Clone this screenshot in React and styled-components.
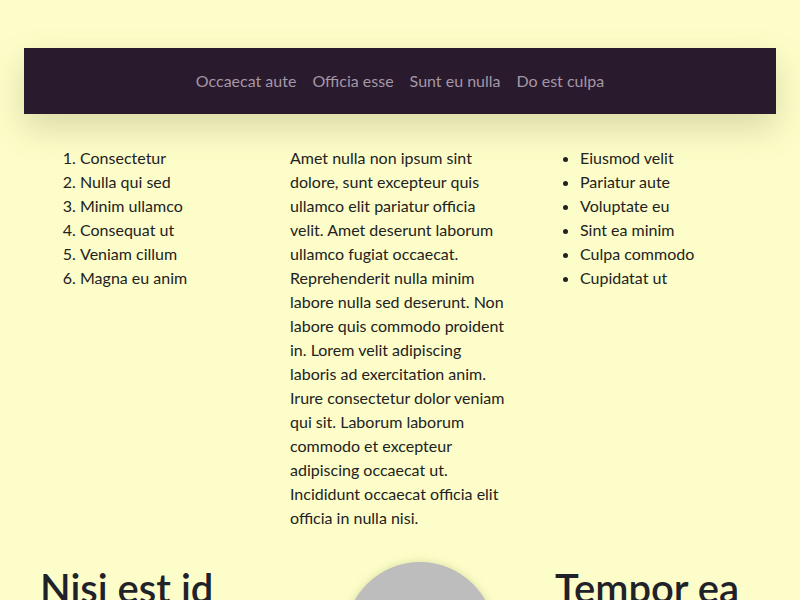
import React from 'react';
import styled, { createGlobalStyle } from 'styled-components';

const GlobalStyle = createGlobalStyle`
  html, body {
    margin: 0;
    padding: 0;
    background: #fdfdc9;
  }
  body {
    font-family: Lato, "Open Sans", sans-serif;
    color: #222;
    overflow: hidden;
  }
`;

const Pagina = styled.div`
  padding: 48px 24px 0;
`;

const Navegacion = styled.nav`
  height: 66px;
  background-color: #291a2d;
  display: flex;
  align-items: center;
  justify-content: center;
  gap: 16px;
  padding-bottom: 2px;
  box-sizing: border-box;
  box-shadow: 0 14px 34px rgba(90, 90, 40, 0.22);
`;

const Enlace = styled.a`
  color: #a597a5;
  font-size: 16px;
  text-decoration: none;
`;

const Columnas = styled.div`
  display: grid;
  grid-template-columns: 225px 219px 225px;
  column-gap: 25px;
  margin: 32px 0 0 16px;
`;

const ListaNumerada = styled.ol`
  margin: 0;
  padding-left: 40px;
  font-size: 16px;
  line-height: 24px;
`;

const ListaPuntos = styled.ul`
  margin: 0 0 0 6px;
  padding-left: 40px;
  font-size: 16px;
  line-height: 24px;
`;

const Parrafo = styled.p`
  margin: 0;
  font-size: 16px;
  line-height: 24px;
`;

const Destacados = styled.div`
  display: grid;
  grid-template-columns: 305px 150px 1fr;
  margin: 32px 0 0 16px;
  align-items: start;
`;

const Titulo = styled.h2`
  margin: 2px 0 0;
  padding-left: ${(p) => p.$sangria || 0}px;
  font-size: 40px;
  font-weight: 600;
  color: #1f2329;
  line-height: 48px;
  white-space: nowrap;
`;

const Circulo = styled.div`
  width: 150px;
  height: 150px;
  border-radius: 50%;
  background: #bdbdbd;
  box-shadow: 0 0 8px rgba(120, 120, 60, 0.25);
`;

const App = () => {
  return (
    <Pagina>
      <GlobalStyle />
      <Navegacion>
        <Enlace href="#">Occaecat aute</Enlace>
        <Enlace href="#">Officia esse</Enlace>
        <Enlace href="#">Sunt eu nulla</Enlace>
        <Enlace href="#">Do est culpa</Enlace>
      </Navegacion>

      <Columnas>
        <ListaNumerada>
          <li>Consectetur</li>
          <li>Nulla qui sed</li>
          <li>Minim ullamco</li>
          <li>Consequat ut</li>
          <li>Veniam cillum</li>
          <li>Magna eu anim</li>
        </ListaNumerada>
        <Parrafo>
          Amet nulla non ipsum sint dolore, sunt excepteur quis ullamco elit pariatur officia
          velit. Amet deserunt laborum ullamco fugiat occaecat. Reprehenderit nulla minim
          labore nulla sed deserunt. Non labore quis commodo proident in. Lorem velit adipiscing
          laboris ad exercitation anim. Irure consectetur dolor veniam qui sit. Laborum laborum
          commodo et excepteur adipiscing occaecat ut. Incididunt occaecat officia elit officia
          in nulla nisi.
        </Parrafo>
        <ListaPuntos>
          <li>Eiusmod velit</li>
          <li>Pariatur aute</li>
          <li>Voluptate eu</li>
          <li>Sint ea minim</li>
          <li>Culpa commodo</li>
          <li>Cupidatat ut</li>
        </ListaPuntos>
      </Columnas>

      <Destacados>
        <Titulo>Nisi est id</Titulo>
        <Circulo />
        <Titulo $sangria={60}>Tempor ea</Titulo>
      </Destacados>
    </Pagina>
  );
};

export default App;
